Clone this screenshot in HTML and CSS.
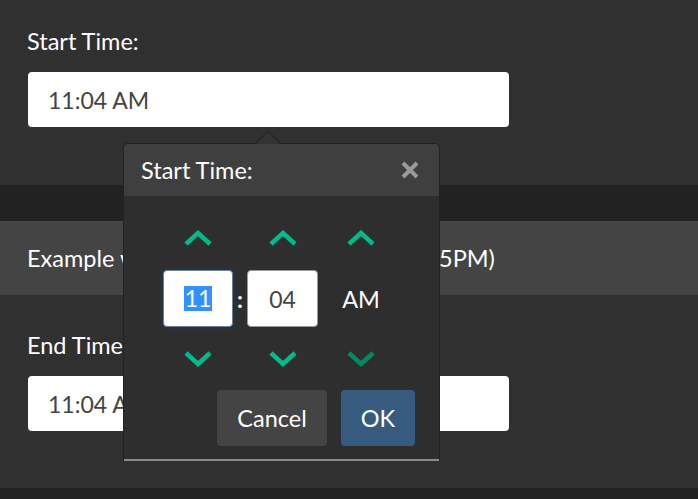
FILE: index.html
```html
<!DOCTYPE html>
<html lang="en">

<head>
    <meta charset="UTF-8">
    <meta name="viewport" content="width=device-width, initial-scale=1, shrink-to-fit=no">
    <title>Time Picker</title>
    <link rel="stylesheet" href="styles.css">
</head>

<body>
    <div class="page">
        <div class="field-section">
            <label class="field-label">Start Time:</label>
            <div class="time-input">11:04 AM</div>
        </div>

        <div class="spacer"></div>

        <div class="example-title">Example with min and max time (9AM - 5PM)</div>

        <div class="field-section end-section">
            <label class="field-label">End Time:</label>
            <div class="time-input">11:04 AM</div>
        </div>

        <div class="footer-band"></div>

        <!-- popup for the start time -->
        <div class="picker">
            <div class="picker-arrow"></div>
            <div class="picker-header">
                <span class="picker-title">Start Time:</span>
                <svg class="picker-close" width="18" height="18" viewBox="0 0 18 18">
                    <path d="M2 2 L16 16 M16 2 L2 16" stroke="#9a9a9a" stroke-width="4" fill="none"/>
                </svg>
            </div>
            <div class="picker-body">
                <div class="spin-grid">
                    <div class="spin-btn">
                        <svg width="28" height="16" viewBox="0 0 28 16"><polyline points="2,14 14,3 26,14" class="chev"/></svg>
                    </div>
                    <div></div>
                    <div class="spin-btn">
                        <svg width="28" height="16" viewBox="0 0 28 16"><polyline points="2,14 14,3 26,14" class="chev"/></svg>
                    </div>
                    <div class="spin-btn">
                        <svg width="28" height="16" viewBox="0 0 28 16"><polyline points="2,14 14,3 26,14" class="chev"/></svg>
                    </div>

                    <div class="spin-box focused"><span class="selected">11</span></div>
                    <div class="spin-colon">:</div>
                    <div class="spin-box">04</div>
                    <div class="spin-ampm">AM</div>

                    <div class="spin-btn">
                        <svg width="28" height="16" viewBox="0 0 28 16"><polyline points="2,2 14,13 26,2" class="chev"/></svg>
                    </div>
                    <div></div>
                    <div class="spin-btn">
                        <svg width="28" height="16" viewBox="0 0 28 16"><polyline points="2,2 14,13 26,2" class="chev"/></svg>
                    </div>
                    <div class="spin-btn">
                        <svg width="28" height="16" viewBox="0 0 28 16"><polyline points="2,2 14,13 26,2" class="chev dim"/></svg>
                    </div>
                </div>

                <div class="picker-buttons">
                    <button class="btn btn-cancel">Cancel</button>
                    <button class="btn btn-ok">OK</button>
                </div>
            </div>
        </div>
    </div>
</body>

</html>
```

FILE: styles.css
```css
body {
    font-family: Lato, "Open Sans", sans-serif;
    background-color: #222;
    margin: 0;
    color: #fff;
}

.page {
    position: relative;
    width: 698px;
    height: 499px;
    overflow: hidden;
    display: flex;
    flex-direction: column;
}

.field-section {
    background-color: #303030;
    padding: 28px 189px 58px 27px;
    display: flex;
    flex-direction: column;
}

.end-section {
    padding-top: 37px;
    padding-bottom: 57px;
}

.field-label {
    font-size: 23.5px;
    line-height: 26px;
    height: 26px;
    margin-bottom: 18px;
}

.time-input {
    background-color: #fff;
    color: #444;
    height: 55px;
    border-radius: 4px;
    font-size: 23px;
    padding-left: 20px;
    margin-left: 1px;
    display: flex;
    align-items: center;
}

.spacer {
    height: 36px;
    background-color: #222;
}

.example-title {
    height: 74px;
    background-color: #444;
    padding-left: 27px;
    font-size: 23.5px;
    display: flex;
    align-items: center;
    white-space: nowrap;
}

.footer-band {
    flex: 1;
    background-color: #222;
}

.picker {
    position: absolute;
    left: 123px;
    top: 143px;
    width: 317px;
    background-color: #2e2e2e;
    border: 1px solid rgba(0, 0, 0, 0.25);
    border-bottom: none;
    border-radius: 5px 5px 0 0;
    box-sizing: border-box;
}

.picker-arrow {
    position: absolute;
    left: 130px;
    top: -14px;
    width: 0;
    height: 0;
    border-left: 14px solid transparent;
    border-right: 14px solid transparent;
    border-bottom: 14px solid #262626;
}

.picker-arrow::after {
    content: "";
    position: absolute;
    left: -12px;
    top: 2px;
    border-left: 12px solid transparent;
    border-right: 12px solid transparent;
    border-bottom: 12px solid #333;
}

.picker-header {
    height: 52px;
    background-color: #3f3f3f;
    border-radius: 4px 4px 0 0;
    padding: 0 20px 0 17px;
    display: flex;
    align-items: center;
    justify-content: space-between;
}

.picker-title {
    font-size: 23.5px;
}

.picker-close {
    display: block;
}

.picker-body {
    padding: 27px 24px 13px 39px;
    border-bottom: 2px solid #8a8a8a;
}

.spin-grid {
    display: grid;
    grid-template-columns: 70px 14px 71px 86px;
    grid-template-rows: 30px 57px 30px;
    row-gap: 17px;
    align-items: center;
    justify-items: center;
}

.spin-btn {
    width: 100%;
    height: 30px;
    display: flex;
    align-items: center;
    justify-content: center;
}

.chev {
    fill: none;
    stroke: #00bc8c;
    stroke-width: 4.5;
}

.chev.dim {
    stroke: #008a66;
}

.spin-box {
    width: 100%;
    height: 57px;
    box-sizing: border-box;
    background-color: #fff;
    color: #444;
    border: 1px solid #999;
    border-radius: 4px;
    font-size: 23px;
    display: flex;
    align-items: center;
    justify-content: center;
}

.spin-box.focused {
    border-color: #6f7f90;
    box-shadow: 0 0 0 3px #28323d;
}

.selected {
    background-color: #3390ff;
    color: #fff;
    line-height: 25px;
    padding: 0 1px;
}

.spin-colon {
    font-size: 23px;
    font-weight: bold;
}

.spin-ampm {
    font-size: 23.5px;
}

.picker-buttons {
    display: flex;
    justify-content: flex-end;
    gap: 14px;
    margin-top: 16px;
}

.btn {
    font-family: Lato, "Open Sans", sans-serif;
    font-size: 23.5px;
    color: #fff;
    border: none;
    border-radius: 4px;
    height: 56px;
    padding: 0;
}

.btn-cancel {
    background-color: #444;
    width: 110px;
}

.btn-ok {
    background-color: #375a7f;
    width: 74px;
}
```
